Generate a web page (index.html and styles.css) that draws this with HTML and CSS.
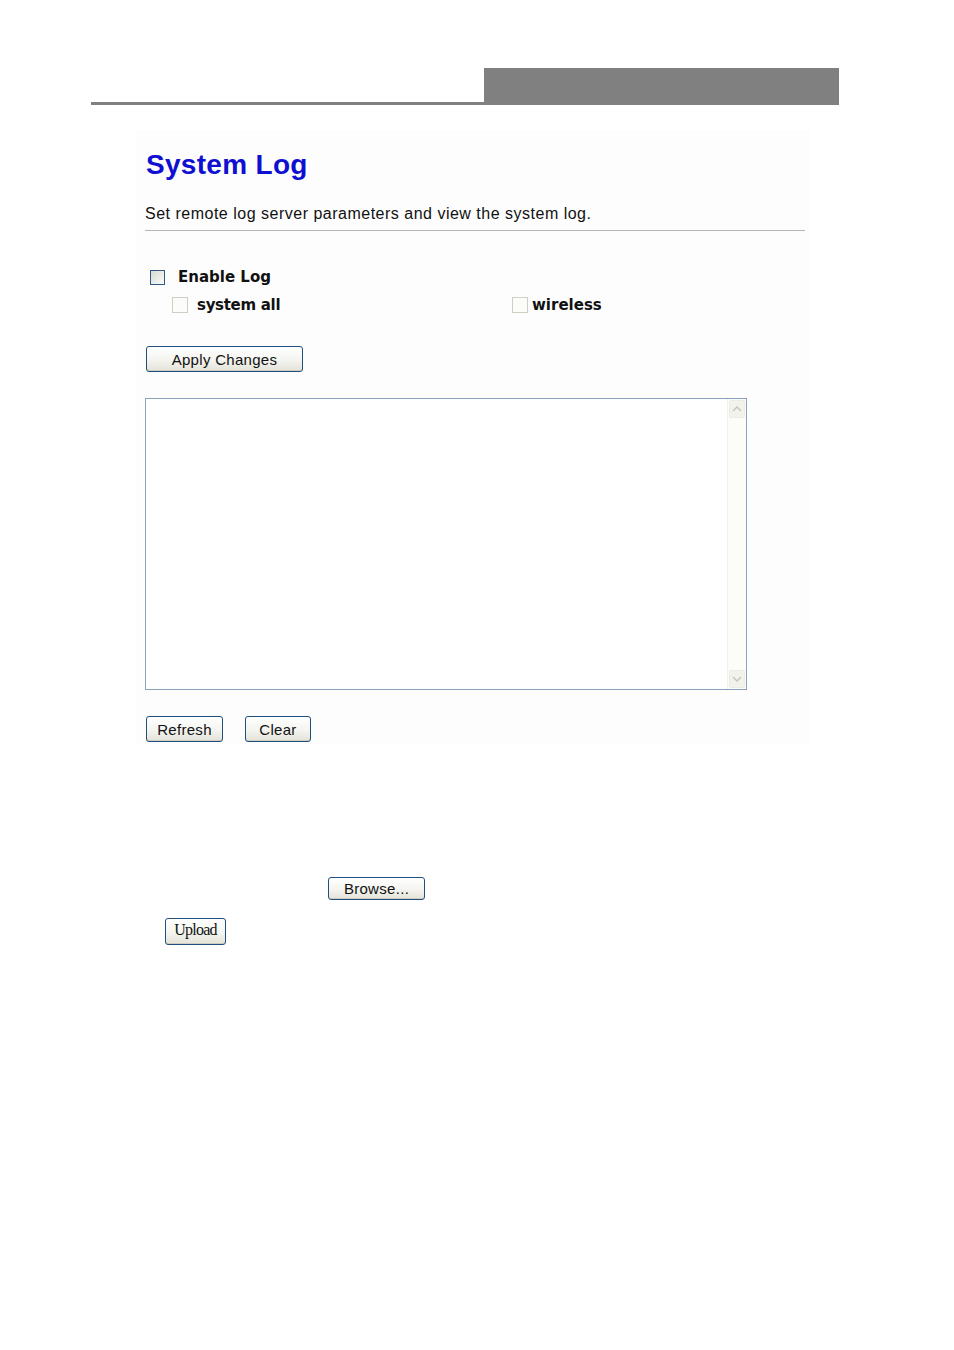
FILE: index.html
```html
<!DOCTYPE html>
<html>
<head>
<meta charset="utf-8">
<link rel="stylesheet" href="styles.css">
</head>
<body>
<div class="header">
  <div class="header-line"></div>
  <div class="header-box"></div>
</div>
<div class="panel">
  <h1 class="title">System Log</h1>
  <p class="desc">Set remote log server parameters and view the system log.</p>
  <div class="rule"></div>
  <div class="row-enable">
    <span class="cb cb-active"></span>
    <span class="lbl">Enable Log</span>
  </div>
  <div class="row-sub">
    <div class="sub-item sub-system">
      <span class="cb cb-disabled"></span>
      <span class="lbl">system all</span>
    </div>
    <div class="sub-item sub-wireless">
      <span class="cb cb-disabled"></span>
      <span class="lbl lbl-tight">wireless</span>
    </div>
  </div>
  <div class="row-apply">
    <button class="btn btn-apply">Apply Changes</button>
  </div>
  <div class="logbox">
    <div class="log-content"></div>
    <div class="scrollbar">
      <div class="sb-btn">
        <svg width="10" height="6" viewBox="0 0 10 6"><path d="M1 5 L5 1 L9 5" fill="none" stroke="#c8c8c0" stroke-width="1.6"/></svg>
      </div>
      <div class="sb-track"></div>
      <div class="sb-btn">
        <svg width="10" height="6" viewBox="0 0 10 6"><path d="M1 1 L5 5 L9 1" fill="none" stroke="#c8c8c0" stroke-width="1.6"/></svg>
      </div>
    </div>
  </div>
  <div class="row-actions">
    <button class="btn btn-refresh">Refresh</button>
    <button class="btn btn-clear">Clear</button>
  </div>
</div>
<div class="upload-area">
  <div class="row-browse">
    <button class="btn btn-browse">Browse...</button>
  </div>
  <div class="row-upload">
    <button class="btn btn-upload">Upload</button>
  </div>
</div>
</body>
</html>
```
FILE: styles.css
```css
html, body {
  margin: 0;
  padding: 0;
  background: #ffffff;
}
body {
  width: 954px;
  height: 1350px;
  font-family: "Liberation Sans", Arial, sans-serif;
  color: #000;
}
.header {
  display: flex;
  align-items: flex-end;
  margin: 68px 0 0 91px;
  width: 748px;
}
.header-line {
  width: 393px;
  height: 3px;
  background: #808080;
}
.header-box {
  width: 355px;
  height: 37px;
  background: #808080;
}
.panel {
  margin: 25px 0 0 136px;
  width: 674px;
  height: 615px;
  background: #fdfdfd;
  padding: 19px 0 0 9px;
  box-sizing: border-box;
}
.title {
  margin: 0 0 0 1px;
  font-size: 28px;
  line-height: 32px;
  font-weight: bold;
  color: #0f0fd2;
  letter-spacing: 0.3px;
}
.desc {
  margin: 23px 0 0 0;
  font-size: 16px;
  line-height: 20px;
  color: #111;
  letter-spacing: 0.5px;
}
.rule {
  margin-top: 6px;
  width: 660px;
  height: 1px;
  background: #b4b4b4;
}
.cb {
  display: inline-block;
  box-sizing: border-box;
  flex: none;
}
.cb-active {
  width: 15px;
  height: 15px;
  border: 1px solid #2c5c87;
  background: linear-gradient(135deg, #d8d8d0 0%, #eeeeea 60%, #fbfbf8 100%);
}
.cb-disabled {
  width: 16px;
  height: 16px;
  border: 1px solid #cfcdc4;
  background: #fcfcfb;
}
.lbl {
  font-family: "DejaVu Sans", Verdana, sans-serif;
  font-weight: bold;
  font-size: 15px;
  line-height: 18px;
  color: #111;
}
.row-enable {
  display: flex;
  align-items: center;
  gap: 13px;
  margin: 38px 0 0 5px;
  height: 16px;
}
.row-sub {
  display: flex;
  margin: 12px 0 0 27px;
  height: 16px;
}
.sub-item {
  display: flex;
  align-items: center;
  gap: 9px;
}
.sub-system {
  width: 340px;
}
.sub-system .lbl {
  letter-spacing: -0.3px;
}
.sub-wireless {
  gap: 4px;
}
.row-apply {
  margin-top: 33px;
  margin-left: 1px;
}
.btn {
  display: block;
  box-sizing: border-box;
  border: 1px solid #1f4f7e;
  border-radius: 3px;
  background: linear-gradient(#ffffff 0%, #f4f4f0 55%, #e4e2d8 100%);
  font-family: "Liberation Sans", Arial, sans-serif;
  font-size: 15px;
  color: #111;
  padding: 0;
  letter-spacing: 0.3px;
  box-shadow: inset 0 -1px 0 #d0cdbf, inset 0 1px 0 #fff;
}
.btn-apply {
  width: 157px;
  height: 26px;
}
.logbox {
  display: flex;
  margin-top: 26px;
  width: 602px;
  height: 292px;
  box-sizing: border-box;
  border: 1px solid #8aa2bd;
  background: #ffffff;
}
.log-content {
  flex: 1;
}
.scrollbar {
  width: 19px;
  display: flex;
  flex-direction: column;
  background: #fcfcf8;
  border-left: 1px solid #f0f0ea;
  padding: 1px 0;
  box-sizing: border-box;
}
.sb-btn {
  height: 18px;
  display: flex;
  align-items: center;
  justify-content: center;
  background: #f3f3ee;
  border: 1px solid #ecece6;
  border-radius: 2px;
  box-sizing: border-box;
  margin: 0 1px;
}
.sb-track {
  flex: 1;
}
.row-actions {
  display: flex;
  gap: 22px;
  margin-top: 26px;
  margin-left: 1px;
}
.btn-refresh {
  width: 77px;
  height: 26px;
}
.btn-clear {
  width: 66px;
  height: 26px;
}
.upload-area {
  margin-top: 132px;
}
.row-browse {
  margin-left: 328px;
}
.btn-browse {
  width: 97px;
  height: 23px;
  font-size: 15px;
}
.row-upload {
  margin: 18px 0 0 165px;
}
.btn-upload {
  width: 61px;
  height: 27px;
  font-family: "Liberation Serif", "Times New Roman", serif;
  font-size: 16px;
  letter-spacing: -0.8px;
  padding-bottom: 4px;
}
```
